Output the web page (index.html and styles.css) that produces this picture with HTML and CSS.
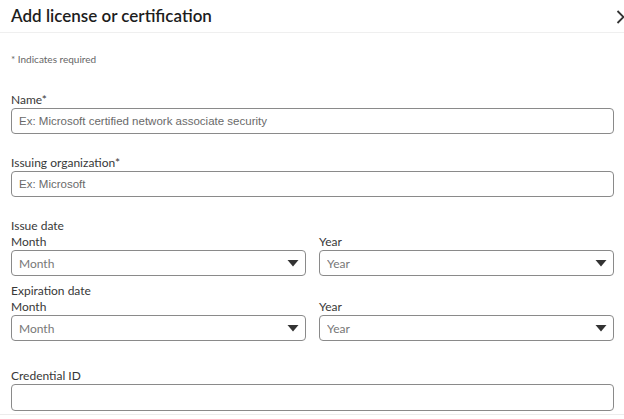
FILE: index.html
```html
<!DOCTYPE html>
<html lang="en">
<head>
  <meta charset="UTF-8">
  <meta name="viewport" content="width=device-width, initial-scale=1.0">
  <title>Add license or certification</title>
  <link rel="stylesheet" href="styles.css">
</head>
<body>
  <div class="modal">
    <div class="modal-header">
      <h1 class="modal-title">Add license or certification</h1>
      <svg class="next-icon" width="10" height="16" viewBox="0 0 10 16">
        <polyline points="1.5,2 7.5,8 1.5,14" fill="none" stroke="#333" stroke-width="1.8"/>
      </svg>
    </div>

    <form class="modal-body">
      <p class="required-note">* Indicates required</p>

      <div class="field field-name">
        <label for="cert-name">Name*</label>
        <input type="text" id="cert-name" placeholder="Ex: Microsoft certified network associate security">
      </div>

      <div class="field field-org">
        <label for="cert-org">Issuing organization*</label>
        <input type="text" id="cert-org" placeholder="Ex: Microsoft">
      </div>

      <div class="date-group issue-date">
        <div class="group-title">Issue date</div>
        <div class="date-row">
          <div class="field">
            <label for="issue-month">Month</label>
            <div class="select-wrap">
              <select id="issue-month"><option>Month</option></select>
              <svg class="caret" width="12" height="7" viewBox="0 0 12 7"><polygon points="0.5,0 11.5,0 6,6.5" fill="#333"/></svg>
            </div>
          </div>
          <div class="field">
            <label for="issue-year">Year</label>
            <div class="select-wrap">
              <select id="issue-year"><option>Year</option></select>
              <svg class="caret" width="12" height="7" viewBox="0 0 12 7"><polygon points="0.5,0 11.5,0 6,6.5" fill="#333"/></svg>
            </div>
          </div>
        </div>
      </div>

      <div class="date-group expiry-date">
        <div class="group-title">Expiration date</div>
        <div class="date-row">
          <div class="field">
            <label for="exp-month">Month</label>
            <div class="select-wrap">
              <select id="exp-month"><option>Month</option></select>
              <svg class="caret" width="12" height="7" viewBox="0 0 12 7"><polygon points="0.5,0 11.5,0 6,6.5" fill="#333"/></svg>
            </div>
          </div>
          <div class="field">
            <label for="exp-year">Year</label>
            <div class="select-wrap">
              <select id="exp-year"><option>Year</option></select>
              <svg class="caret" width="12" height="7" viewBox="0 0 12 7"><polygon points="0.5,0 11.5,0 6,6.5" fill="#333"/></svg>
            </div>
          </div>
        </div>
      </div>

      <div class="field field-credential">
        <label for="cred-id">Credential ID</label>
        <input type="text" id="cred-id">
      </div>
    </form>
  </div>
</body>
</html>
```

FILE: styles.css
```css
body {
  margin: 0;
  background: #fff;
  font-family: Lato, "Open Sans", Arial, sans-serif;
  color: #333;
}

.modal {
  width: 624px;
  height: 419px;
  overflow: hidden;
}

.modal-header {
  height: 32px;
  border-bottom: 1px solid #efefef;
  display: flex;
  align-items: center;
  justify-content: space-between;
  padding-left: 11px;
}

.modal-title {
  margin: 0;
  font-size: 17px;
  font-weight: 600;
  color: #1d1d1d;
  line-height: 26px;
}

.next-icon {
  margin-right: -2px;
  margin-top: 1px;
}

.modal-body {
  padding: 0 10px 0 11px;
  border-bottom: 1px solid #ececec;
}

.required-note {
  margin: 19px 0 0;
  font-size: 10px;
  line-height: 14px;
  color: #666;
}

.field label,
.group-title {
  display: block;
  font-size: 12px;
  line-height: 16px;
  color: #383838;
}

.field input,
.field select {
  display: block;
  width: 100%;
  box-sizing: border-box;
  height: 26px;
  margin: 0;
  border: 1px solid #8a8a8a;
  border-radius: 4px;
  background: #fff;
  padding: 0 7px;
  font-size: 12px;
}

.field input {
  font-family: "Liberation Sans", Arial, sans-serif;
  font-size: 11.5px;
}

.field input::placeholder {
  color: #6a6a6a;
}

.field select {
  appearance: none;
  font-family: Lato, "Open Sans", Arial, sans-serif;
  color: #777;
}

.field-name { margin-top: 26px; }
.field-org { margin-top: 21px; }
.issue-date { margin-top: 21px; }
.expiry-date { margin-top: 7px; }
.field-credential { margin-top: 27px; padding-bottom: 3px; }
.field-credential input { height: 27px; }

.date-row {
  display: grid;
  grid-template-columns: 1fr 1fr;
  gap: 13px;
}

.select-wrap {
  position: relative;
}

.caret {
  position: absolute;
  right: 7px;
  top: 10px;
  pointer-events: none;
}
```
